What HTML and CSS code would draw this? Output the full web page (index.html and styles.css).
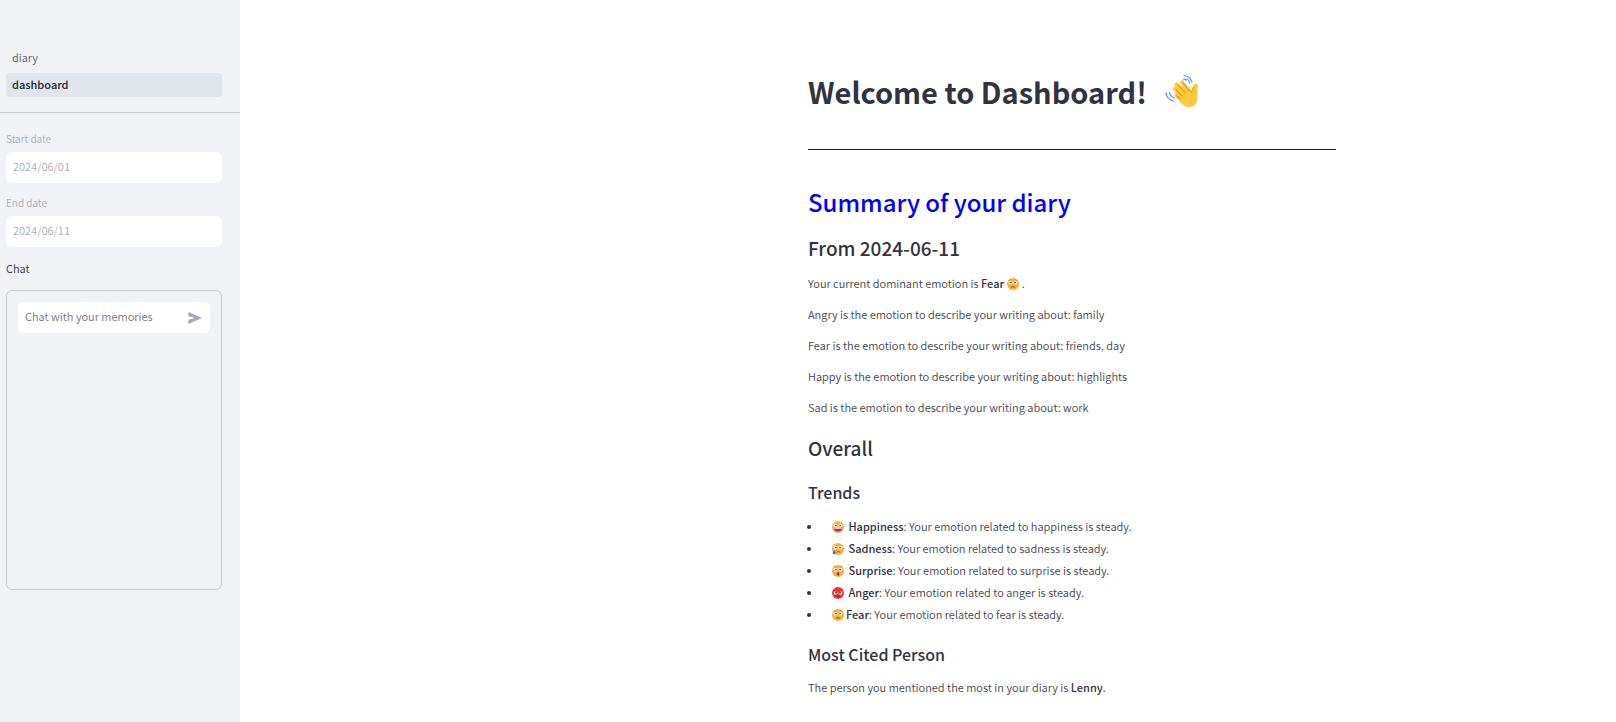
FILE: index.html
```html
<!DOCTYPE html>
<html lang="en">
<head>
<meta charset="utf-8">
<title>Dashboard</title>
<link rel="stylesheet" href="styles.css">
</head>
<body>
<svg class="defs" aria-hidden="true">
  <defs>
    <g id="face"><circle cx="8" cy="8" r="8" fill="#ffb02e"/></g>
    <g id="eyes"><circle cx="4.8" cy="6" r="2.500" fill="#fff"/><circle cx="11.200" cy="6" r="2.500" fill="#fff"/><circle cx="5.200" cy="6.100" r="1.100" fill="#402a32"/><circle cx="10.800" cy="6.100" r="1.100" fill="#402a32"/></g>
    <symbol id="fear" viewBox="0 0 16 16"><use href="#face"/><use href="#eyes"/><path d="M2.600 3.200 5 2M13.400 3.200 11 2" stroke="#8a5a1c" stroke-width=".8" fill="none"/><path d="M5.500 12.300q2.500-2.600 5 0" stroke="#6a4220" stroke-width="1.200" fill="none" stroke-linecap="round"/></symbol>
    <symbol id="happy" viewBox="0 0 16 16"><use href="#face"/><use href="#eyes"/><path d="M2.500 8.500h11q-.4 5.500-5.500 5.500t-5.500-5.500z" fill="#bb1d80"/><path d="M3.200 8.500h9.600v1.800H3.200z" fill="#fff"/></symbol>
    <symbol id="sad" viewBox="0 0 16 16"><use href="#face"/><use href="#eyes"/><path d="M6.500 12q2-1.600 4 0" stroke="#6a4220" stroke-width="1.200" fill="none" stroke-linecap="round"/><path d="M2.800 9.500q1.800 2.200 1.800 3.600a1.800 1.800 0 0 1-3.600 0Q1 11.700 2.800 9.500z" fill="#3f5bf0"/></symbol>
    <symbol id="surprise" viewBox="0 0 16 16"><use href="#face"/><use href="#eyes"/><path d="M2.600 2.800 5 1.800M13.400 2.800 11 1.800" stroke="#8a5a1c" stroke-width=".8"/><ellipse cx="8" cy="12" rx="1.900" ry="2.200" fill="#bb1d80"/></symbol>
    <symbol id="anger" viewBox="0 0 16 16"><circle cx="8" cy="8" r="8" fill="#f8312f"/><circle cx="4.800" cy="7.600" r="2.500" fill="#fff"/><circle cx="11.200" cy="7.600" r="2.500" fill="#fff"/><circle cx="5.300" cy="7.600" r="1.200" fill="#402a32"/><circle cx="10.700" cy="7.600" r="1.200" fill="#402a32"/><path d="M2.500 4.500 7 6.800M13.500 4.500 9 6.800" stroke="#8c1a20" stroke-width="1.200"/><path d="M5.800 12.800q2.200-1.600 4.400 0" stroke="#5c1a20" stroke-width="1.200" fill="none"/></symbol>
  </defs>
</svg>
<div class="app">
  <aside class="sidebar">
    <nav class="nav">
      <a class="nav-link" href="#diary">diary</a>
      <a class="nav-link active" href="#dashboard" aria-current="page">dashboard</a>
    </nav>
    <div class="side-body">
      <div class="field">
        <label for="start">Start date</label>
        <input id="start" type="text" value="2024/06/01" disabled>
      </div>
      <div class="field">
        <label for="end">End date</label>
        <input id="end" type="text" value="2024/06/11" disabled>
      </div>
      <p class="chat-title">Chat</p>
      <section class="chat" aria-label="Chat">
        <form class="chat-form">
          <input type="text" placeholder="Chat with your memories" aria-label="Chat with your memories">
          <button type="button" aria-label="Send"><svg viewBox="0 0 14 12"><path d="M.4 0 14 6 .4 12V7.700L7.200 6 .4 4.300z" fill="#a3a8b8"/></svg></button>
        </form>
      </section>
    </div>
  </aside>
  <main class="main">
    <article class="report">
      <h1>Welcome to Dashboard!
        <svg class="wave" viewBox="0 0 34 34" role="img" aria-label="waving hand">
          <g fill="none" stroke="#ffc83d" stroke-linecap="round" stroke-width="4.200">
            <path d="M22 22 11.500 10.500M20 24 10 15M25 18 17 8.500M19 27 11.500 21"/>
            <path d="M28 20Q29 15 30.800 12" stroke-width="4.600"/>
          </g>
          <path d="M13 21 16 13 22 12 27 19 32.500 15V25Q32 32 25 33 20 33.500 16 29L11 23z" fill="#ffc83d"/>
          <path d="M11.500 16.500 17 22M13 11 20 18.500M18.500 9.500 24.500 17M11.500 21.500 15.500 25" fill="none" stroke="#d98a10" stroke-width="1" stroke-linecap="round"/>
          <path d="M26 19Q28 15 29 12.500" fill="none" stroke="#e59a16" stroke-width="1"/>
          <path d="M19 1.500Q25 2 27 8M22 5Q24 6 24.500 9M18.500 5Q20 5 21 6M1 19Q1.500 25 8.500 27M4.500 18.500Q5 22 9.500 24" fill="none" stroke="#4c8df6" stroke-width="1.200" stroke-linecap="round"/>
        </svg>
      </h1>
      <hr>
      <h2>Summary of your diary</h2>
      <h3>From 2024-06-11</h3>
      <p>Your current dominant emotion is <strong>Fear</strong> <svg class="emoji" role="img" aria-label="fear"><use href="#fear"/></svg> .</p>
      <p>Angry is the emotion to describe your writing about: family</p>
      <p>Fear is the emotion to describe your writing about: friends, day</p>
      <p>Happy is the emotion to describe your writing about: highlights</p>
      <p>Sad is the emotion to describe your writing about: work</p>
      <h3 class="overall">Overall</h3>
      <h4>Trends</h4>
      <ul>
        <li><svg class="emoji" aria-hidden="true"><use href="#happy"/></svg> <strong>Happiness</strong>: Your emotion related to happiness is steady.</li>
        <li><svg class="emoji" aria-hidden="true"><use href="#sad"/></svg> <strong>Sadness</strong>: Your emotion related to sadness is steady.</li>
        <li><svg class="emoji" aria-hidden="true"><use href="#surprise"/></svg> <strong>Surprise</strong>: Your emotion related to surprise is steady.</li>
        <li><svg class="emoji" aria-hidden="true"><use href="#anger"/></svg> <strong>Anger</strong>: Your emotion related to anger is steady.</li>
        <li><svg class="emoji" aria-hidden="true"><use href="#fear"/></svg><strong>Fear</strong>: Your emotion related to fear is steady.</li>
      </ul>
      <h4>Most Cited Person</h4>
      <p>The person you mentioned the most in your diary is <strong>Lenny</strong>.</p>
    </article>
  </main>
</div>
</body>
</html>
```
FILE: styles.css
```css
* { box-sizing: border-box; }
body {
  margin: 0;
  background: #fff;
  color: #31333f;
  font: 350 11px/19px "Noto Sans CJK SC", "Noto Sans", sans-serif;
}
.defs { position: absolute; width: 0; height: 0; }
.app { display: flex; min-height: 100vh; }
.sidebar { flex: 0 0 240px; background: #f0f2f6; }
.nav {
  display: flex;
  flex-direction: column;
  gap: 3px;
  padding: 46px 18px 15px 6px;
  border-bottom: 1px solid #cbcdd3;
}
.nav-link {
  padding: 0 6px 2px;
  border-radius: 3px;
  line-height: 22px;
  color: #5c5e69;
  text-decoration: none;
}
.nav-link.active { background: #e1e6ed; color: #262730; font-weight: 500; }
.side-body { padding: 18px 18px 0 6px; }
.field { margin-bottom: 12px; }
.field label { display: block; margin-bottom: 5px; font-size: 10px; line-height: 16px; color: #acaeb6; }
.field input, .chat-form input {
  display: block;
  width: 100%;
  height: 31px;
  padding: 0 7px 3px;
  border: 0;
  border-radius: 6px;
  background: #fff;
  font: inherit;
  color: #acaeb6;
}
.chat-title { margin: 0 0 12px; }
.chat {
  min-height: 300px;
  padding: 11px;
  border: 1px solid #cbccd2;
  border-radius: 6px;
}
.chat-form { display: flex; background: #fff; border-radius: 6px; }
.chat-form input { flex: 1; min-width: 0; color: #31333f; }
.chat-form input::placeholder { color: #757782; opacity: 1; }
.chat-form button { display: flex; align-items: center; padding: 0 8px; border: 0; background: none; }
.chat-form svg { width: 14px; height: 12px; }
.main {
  flex: 1;
  display: grid;
  grid-template-columns: 508fr 528fr 220fr;
  padding: 70px 60px 20px;
}
.report { grid-column: 2; }
h1, h2, h3, h4 { margin: 0; font-weight: 500; }
h1 { display: flex; align-items: center; gap: 18px; font-size: 29px; line-height: 42px; font-weight: 700; }
.wave { width: 34px; height: 34px; }
hr { height: 1px; margin: 37px 0 33px; border: 0; background: #00f; }
h2 { font-size: 24px; line-height: 38px; color: #00f; }
h3 { margin: 14px 0 13px; font-size: 19px; line-height: 26px; }
h4 { margin: 18px 0 12px; font-size: 16px; line-height: 22px; }
p { margin: 12px 0; }
h4 + p { margin-top: 13px; }
.report p, .report li { color: #434550; }
.report strong { font-weight: 500; color: #31333f; }
.emoji { width: 12px; height: 12px; margin-left: 1px; vertical-align: -2px; }
ul { margin: 12px 0 0 -1px; padding: 0; list-style: none; }
li { line-height: 22px; }
li::before {
  content: "";
  display: inline-block;
  width: 4px;
  height: 4px;
  margin-right: 20px;
  border-radius: 50%;
  background: #31333f;
  vertical-align: 2px;
}
li .emoji { margin-right: 2px; }
h3.overall { margin: 18px 0 20px; }
```
